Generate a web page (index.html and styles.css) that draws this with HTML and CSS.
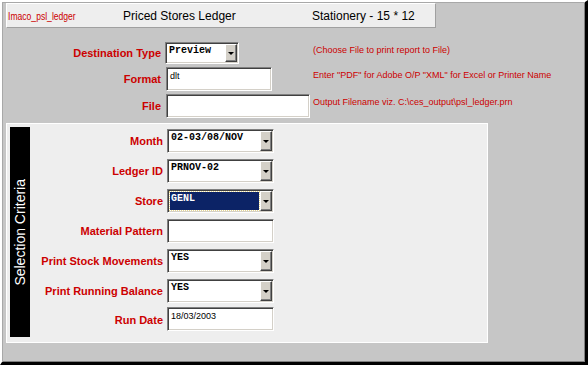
FILE: index.html
```html
<!DOCTYPE html>
<html lang="en">
<head>
    <meta charset="UTF-8">
    <title>Priced Stores Ledger</title>
    <link rel="stylesheet" href="styles.css">
</head>
<body>

<div class="frame">

    <header class="titlebar">
        <span class="app-id"><span>Imaco_psl_ledger</span></span>
        <span class="title">Priced Stores Ledger</span>
        <span class="subtitle">Stationery - 15 * 12</span>
    </header>

    <div class="output-opts">
        <label>Destination Type</label>
        <div class="dropdown w-dest">
            <span class="value">Preview</span>
            <span class="btn"></span>
        </div>
        <p class="hint">(Choose File to print report to File)</p>

        <label>Format</label>
        <div class="textbox w-format">dlt</div>
        <p class="hint">Enter "PDF" for Adobe O/P "XML" for Excel or Printer Name</p>

        <label>File</label>
        <div class="textbox w-file"></div>
        <p class="hint">Output Filename viz. C:\ces_output\psl_ledger.prn</p>
    </div>

    <section class="criteria">
        <div class="side-bar"><span>Selection Criteria</span></div>
        <div class="criteria-rows">
            <label>Month</label>
            <div class="dropdown">
                <span class="value">02-03/08/NOV</span>
                <span class="btn"></span>
            </div>

            <label>Ledger ID</label>
            <div class="dropdown">
                <span class="value">PRNOV-02</span>
                <span class="btn"></span>
            </div>

            <label>Store</label>
            <div class="dropdown focused">
                <span class="value">GENL</span>
                <span class="btn"></span>
            </div>

            <label>Material Pattern</label>
            <div class="textbox"></div>

            <label>Print Stock Movements</label>
            <div class="dropdown">
                <span class="value">YES</span>
                <span class="btn"></span>
            </div>

            <label>Print Running Balance</label>
            <div class="dropdown">
                <span class="value">YES</span>
                <span class="btn"></span>
            </div>

            <label class="tight">Run Date</label>
            <div class="textbox tight">18/03/2003</div>
        </div>
    </section>

</div>

</body>
</html>
```

FILE: styles.css
```css
body {
    margin: 0;
    padding: 0;
    font-family: 'Liberation Sans', Arial, sans-serif;
    background-color: #c6c6c6;
}
.frame {
    width: 588px;
    height: 365px;
    box-sizing: border-box;
    background-color: #c6c6c6;
    border-top: 2px solid #fff;
    border-left: 2px solid #fff;
    border-right: 3px solid #000;
    border-bottom: 3px solid #000;
    box-shadow: inset 1px 1px #a8a8a8, inset -1px -1px #808080;
    overflow: hidden;
}

/* title strip */
.titlebar {
    display: flex;
    align-items: center;
    width: 430px;
    height: 25px;
    box-sizing: border-box;
    margin: 1px 0 0 4px;
    background-color: #eeeeee;
    border-top: 1px solid #fff;
    border-left: 1px solid #fff;
    border-right: 1px solid #a0a0a0;
    border-bottom: 1px solid #a0a0a0;
}
.titlebar .app-id {
    width: 115px;
    padding-left: 1px;
    color: #cc0000;
    font-size: 11px;
}
/* the original uses a condensed face */
.titlebar .app-id span {
    display: inline-block;
    transform: scaleX(0.78);
    transform-origin: left center;
}
.titlebar .title {
    width: 189px;
    font-size: 12px;
    color: #000;
}
.titlebar .subtitle {
    font-size: 12px;
    color: #000;
}

/* labels */
label {
    color: #cc0000;
    font-size: 11px;
    font-weight: bold;
    text-align: right;
    align-self: center;
}

/* output options */
.output-opts {
    display: grid;
    grid-template-columns: 157px 144px auto;
    column-gap: 4px;
    row-gap: 3px;
    margin: 14px 0 5px 2px;
}
.hint {
    margin: 0;
    padding-top: 2px;
    color: #cc0000;
    font-size: 9px;
    line-height: 12px;
}

/* controls */
.dropdown, .textbox {
    display: flex;
    width: 107px;
    height: 24px;
    box-sizing: border-box;
    background-color: #fff;
    border: 1px solid;
    border-color: #808080 #fff #fff #808080;
    box-shadow: inset 1px 1px #404040, inset -1px -1px #d4d0c8;
}
.dropdown .value {
    flex: 1;
    padding: 2px 0 0 3px;
    font-family: 'Liberation Mono', 'Courier New', monospace;
    font-size: 10px;
    font-weight: bold;
    line-height: 12px;
    color: #000;
}
.dropdown .btn {
    width: 12px;
    margin: 1px 1px 1px 0;
    box-sizing: border-box;
    background-color: #d4d0c8;
    border-top: 1px solid #fff;
    border-left: 1px solid #fff;
    border-right: 1px solid #404040;
    border-bottom: 1px solid #404040;
    box-shadow: inset -1px -1px #808080;
    display: flex;
    align-items: center;
    justify-content: center;
}
.dropdown .btn::after {
    content: "";
    border-left: 3px solid transparent;
    border-right: 3px solid transparent;
    border-top: 3px solid #000;
    margin-top: 1px;
}
.dropdown.focused .value {
    margin: 2px 1px 2px 2px;
    padding: 1px 0 0 1px;
    background-color: #0c2366;
    color: #fff;
    outline: 1px dotted #e8d890;
}
.textbox {
    padding: 3px 0 0 3px;
    font-size: 9px;
    line-height: 11px;
    color: #000;
}
.w-dest {
    width: 74px;
    height: 22px;
}
.w-format {
    width: 106px;
    margin-left: 1px;
}
.w-file {
    width: 144px;
    margin-left: 1px;
}

/* selection criteria panel */
.criteria {
    display: flex;
    width: 482px;
    box-sizing: border-box;
    margin-left: 4px;
    padding: 3px 0 5px 3px;
    background-color: #eeeeee;
    border: 1px solid #fff;
}
.side-bar {
    width: 20px;
    height: 210px;
    background-color: #000;
    display: flex;
    align-items: center;
    justify-content: center;
}
.side-bar span {
    writing-mode: vertical-rl;
    transform: rotate(180deg);
    color: #fff;
    font-size: 14px;
}
.criteria-rows {
    display: grid;
    grid-template-columns: 133px 107px;
    grid-auto-rows: 24px;
    column-gap: 4px;
    row-gap: 6px;
    padding-top: 2px;
    align-content: start;
}
.criteria-rows .tight {
    margin-top: -2px;
}
```
